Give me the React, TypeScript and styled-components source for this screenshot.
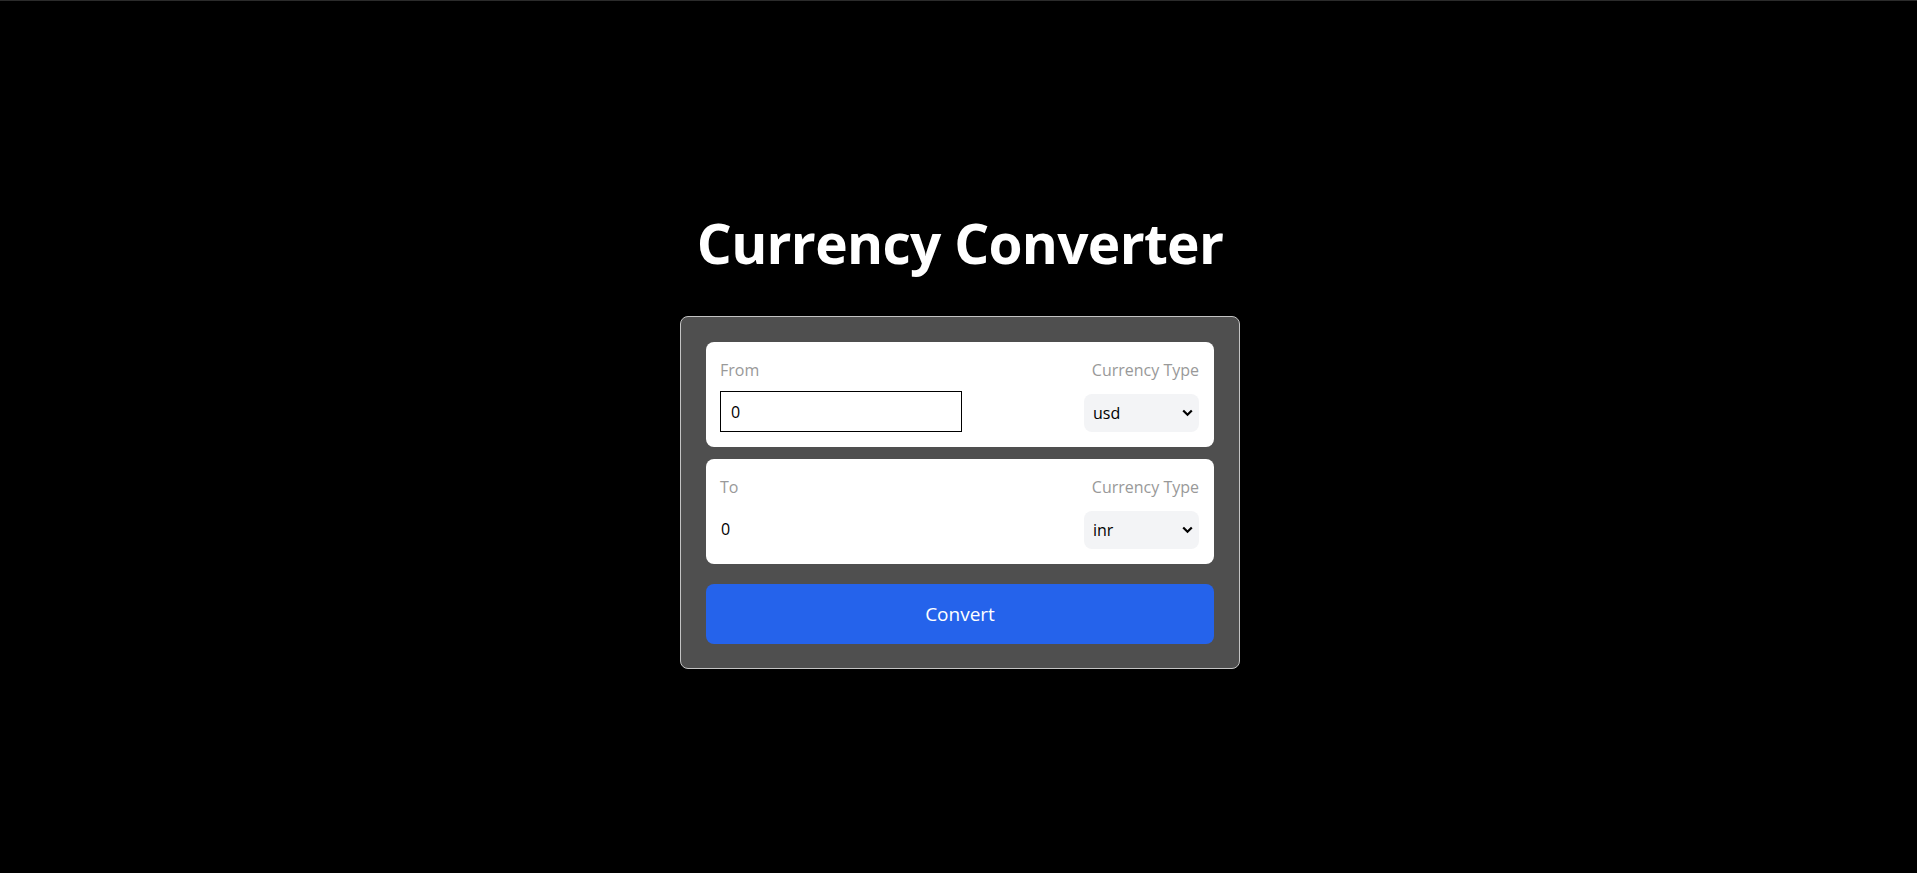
import React, { useState } from "react";
import styled, { createGlobalStyle } from "styled-components";

const GlobalStyle = createGlobalStyle`
  * { box-sizing: border-box; }
  html, body { margin: 0; padding: 0; background: #000; }
  body { font-family: "Open Sans", "Noto Sans", Arial, sans-serif; }
`;

const Page = styled.div`
  min-height: 100vh;
  border-top: 1px solid #2b2b2b;
  background: #000;
  display: flex;
  flex-direction: column;
  align-items: center;
  padding: 212px 0 0 3px;
`;

const Title = styled.h1`
  margin: 0 0 43px;
  font-size: 55px;
  line-height: 60px;
  font-weight: 700;
  color: #fff;
  letter-spacing: -0.7px;
`;

const Card = styled.div`
  width: 560px;
  padding: 25px 25px 24px;
  border: 1px solid #c4c4c4;
  border-radius: 8px;
  background: #4f4f4f;
  display: flex;
  flex-direction: column;
`;

const Box = styled.div<{ $gap: number }>`
  background: #fff;
  border-radius: 8px;
  padding: 16px 15px 15px 14px;
  display: flex;
  justify-content: space-between;
  margin-bottom: ${(p) => p.$gap}px;
`;

const Column = styled.div<{ $right?: boolean }>`
  display: flex;
  flex-direction: column;
  justify-content: space-between;
  align-items: ${(p) => (p.$right ? "flex-end" : "flex-start")};
`;

const Label = styled.label`
  font-size: 16px;
  line-height: 24px;
  color: #999;
  margin-bottom: 9px;
`;

const AmountInput = styled.input<{ $plain?: boolean }>`
  width: 242px;
  height: 41px;
  font-family: inherit;
  font-size: 16px;
  color: #000;
  background: transparent;
  outline: none;
  border: ${(p) => (p.$plain ? "none" : "1px solid #000")};
  padding: ${(p) => (p.$plain ? "0 0 0 1px" : "0 0 0 10px")};
`;

const SelectWrap = styled.div`
  position: relative;
  width: 115px;
  height: 38px;
`;

const Select = styled.select`
  appearance: none;
  -webkit-appearance: none;
  width: 100%;
  height: 100%;
  border: none;
  outline: none;
  border-radius: 8px;
  background: #f3f4f6;
  font-family: inherit;
  font-size: 16px;
  color: #000;
  padding: 0 0 0 9px;
  cursor: pointer;
`;

const Chevron = styled.svg`
  position: absolute;
  right: 6px;
  top: 15px;
  width: 11px;
  height: 8px;
  pointer-events: none;
`;

const Button = styled.button`
  width: 100%;
  height: 60px;
  border: none;
  border-radius: 8px;
  background: #2563eb;
  color: #fff;
  font-family: inherit;
  font-size: 19px;
  cursor: pointer;
`;

const currencies = ["usd", "inr", "eur", "gbp", "jpy"];

function CurrencySelect({ value, onChange }: { value: string; onChange: (v: string) => void }) {
  return (
    <SelectWrap>
      <Select value={value} onChange={(e) => onChange(e.target.value)}>
        {currencies.map((c) => (
          <option key={c} value={c}>
            {c}
          </option>
        ))}
      </Select>
      <Chevron viewBox="0 0 11 8">
        <path d="M1.2 1.5 L5.5 5.8 L9.8 1.5" fill="none" stroke="#000" strokeWidth="2.2" />
      </Chevron>
    </SelectWrap>
  );
}

export default function App() {
  const [from, setFrom] = useState("usd");
  const [to, setTo] = useState("inr");
  const [amount, setAmount] = useState("0");
  return (
    <>
      <GlobalStyle />
      <Page>
        <Title>Currency Converter</Title>
        <Card>
          <Box $gap={12}>
            <Column>
              <Label>From</Label>
              <AmountInput value={amount} onChange={(e) => setAmount(e.target.value)} />
            </Column>
            <Column $right>
              <Label>Currency Type</Label>
              <CurrencySelect value={from} onChange={setFrom} />
            </Column>
          </Box>
          <Box $gap={20}>
            <Column>
              <Label>To</Label>
              <AmountInput $plain value="0" readOnly />
            </Column>
            <Column $right>
              <Label>Currency Type</Label>
              <CurrencySelect value={to} onChange={setTo} />
            </Column>
          </Box>
          <Button>Convert</Button>
        </Card>
      </Page>
    </>
  );
}
